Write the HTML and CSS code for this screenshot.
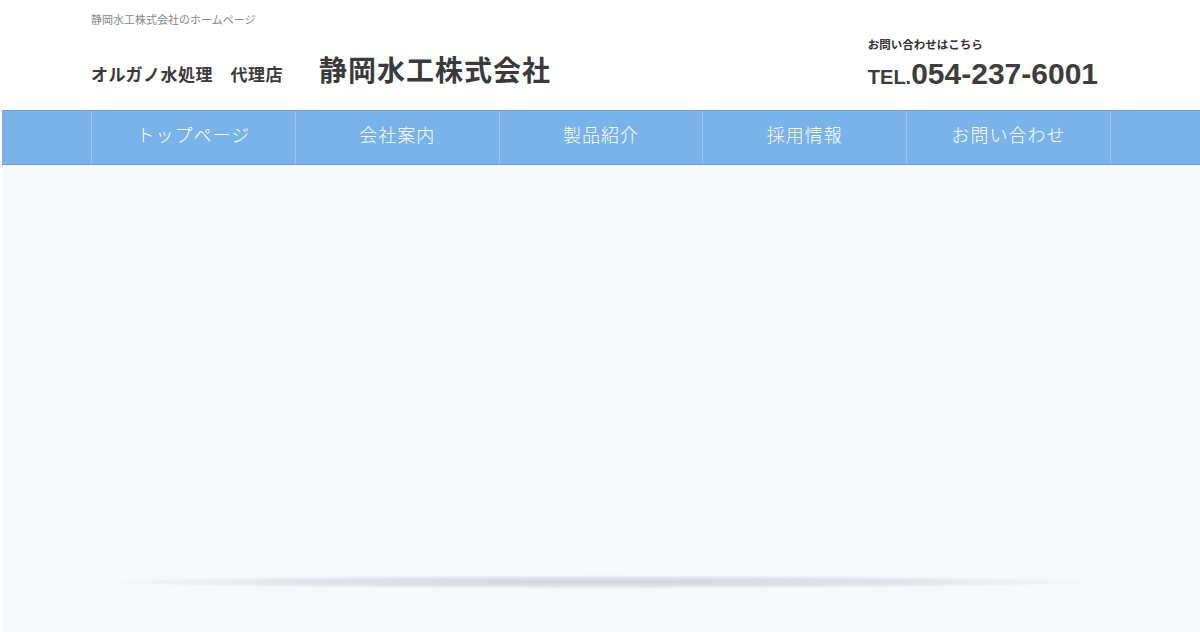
FILE: index.html
```html
<!DOCTYPE html>
<html lang="ja">
<head>
    <meta charset="UTF-8">
    <meta name="viewport" content="width=device-width, initial-scale=1.0">
    <title>静岡水工株式会社</title>
    <link rel="stylesheet" href="styles.css">
</head>
<body>
    <header class="site-header">
        <div class="inner header-inner">
            <div class="brand">
                <p class="tagline">静岡水工株式会社のホームページ</p>
                <div class="brand-row">
                    <span class="agency">オルガノ水処理　代理店</span>
                    <h1 class="company">静岡水工株式会社</h1>
                </div>
            </div>
            <div class="contact">
                <p class="contact-label">お問い合わせはこちら</p>
                <p class="tel"><span class="tel-prefix">TEL.</span>054-237-6001</p>
            </div>
        </div>
    </header>

    <!-- Global navigation -->
    <nav class="global-nav">
        <ul class="inner nav-list">
            <li><a href="#">トップページ</a></li>
            <li><a href="#">会社案内</a></li>
            <li><a href="#">製品紹介</a></li>
            <li><a href="#">採用情報</a></li>
            <li><a href="#">お問い合わせ</a></li>
        </ul>
    </nav>

    <main class="main">
        <div class="main-shadow"></div>
    </main>
</body>
</html>
```
FILE: styles.css
```css
* {
    margin: 0;
    padding: 0;
    box-sizing: border-box;
}

html, body {
    height: 100%;
}

body {
    margin-left: 2px;
    background-color: #fff;
    color: #333;
    font-family: "Noto Sans CJK JP", "Noto Sans", sans-serif;
    display: flex;
    flex-direction: column;
}

.inner {
    width: 1020px;
    margin: 0 auto;
}

/* Header */
.site-header {
    height: 110px;
    background-color: #fff;
}

.header-inner {
    display: flex;
    justify-content: space-between;
    height: 100%;
}

.tagline {
    font-size: 11px;
    color: #888;
    line-height: 14px;
    padding-top: 12px;
}

.brand-row {
    display: flex;
    align-items: baseline;
    margin-top: 23px;
}

.agency {
    font-size: 17px;
    font-weight: bold;
    color: #3a3a3a;
    letter-spacing: 0.5px;
    margin-right: 36px;
}

.company {
    font-size: 28px;
    font-weight: bold;
    color: #3a3a3a;
    letter-spacing: 1px;
}

.contact {
    padding-top: 36px;
    padding-right: 13px;
}

.contact-label {
    font-size: 11.5px;
    font-weight: bold;
    color: #333;
    line-height: 16px;
}

.tel {
    font-family: "Liberation Sans", Arial, sans-serif;
    font-weight: bold;
    font-size: 30px;
    color: #3d3d3d;
    line-height: 32px;
    margin-top: 6px;
}

.tel-prefix {
    font-size: 20px;
}

/* Navigation */
.global-nav {
    height: 55px;
    background-color: #7ab2ea;
    border-top: 1px solid #6a9fd4;
    border-bottom: 1px solid #6a9fd4;
}

.nav-list {
    list-style: none;
    display: flex;
    height: 100%;
    border-left: 1px solid #9cc6f0;
}

.nav-list li {
    width: 204px;
    border-right: 1px solid #9cc6f0;
}

.nav-list a {
    display: flex;
    align-items: center;
    justify-content: center;
    height: 100%;
    padding-bottom: 8px;
    color: #fff;
    font-size: 18px;
    font-weight: 300;
    text-decoration: none;
    letter-spacing: 1px;
}

/* Main area */
.main {
    flex: 1;
    background-color: #f5f9fc;
    padding-top: 410px;
}

.main-shadow {
    width: 1004px;
    height: 14px;
    margin: 0 auto;
    background: radial-gradient(ellipse closest-side at center, rgba(150, 150, 165, 0.38) 0%, rgba(150, 150, 165, 0.22) 60%, rgba(150, 150, 165, 0) 100%);
}
```
